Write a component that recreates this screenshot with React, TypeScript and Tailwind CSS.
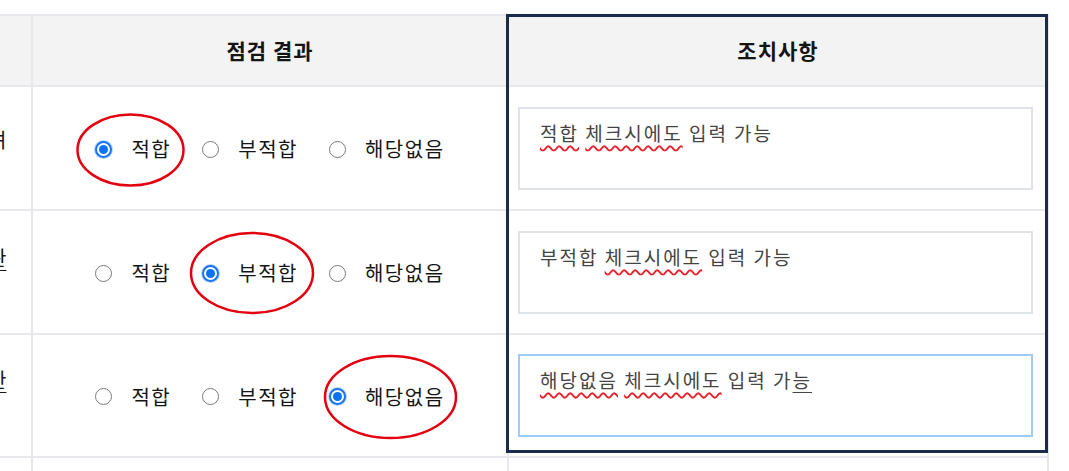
import React from 'react'

const font = { fontFamily: '"Noto Sans CJK KR", "Noto Sans", sans-serif' }

type Choice = '적합' | '부적합' | '해당없음'

function Wavy({ children }: { children: React.ReactNode }) {
    return (
        <span className="underline decoration-wavy decoration-[#e8212b] decoration-[1.5px] underline-offset-[4px]">
            {children}
        </span>
    )
}

const rows: { lead: string; leadTop: string; leadUnderline: boolean; checked: Choice; note: React.ReactNode; focused: boolean }[] = [
    {
        lead: '려',
        leadTop: 'mt-[43px]',
        leadUnderline: false,
        checked: '적합',
        focused: false,
        note: (
            <>
                <Wavy>적합</Wavy> <Wavy>체크시에도</Wavy> 입력 가능
            </>
        ),
    },
    {
        lead: '관',
        leadTop: 'mt-[37px]',
        leadUnderline: true,
        checked: '부적합',
        focused: false,
        note: (
            <>
                부적합 <Wavy>체크시에도</Wavy> 입력 가능
            </>
        ),
    },
    {
        lead: '한',
        leadTop: 'mt-[35px]',
        leadUnderline: true,
        checked: '해당없음',
        focused: true,
        note: (
            <>
                <Wavy>해당없음</Wavy> <Wavy>체크시에도</Wavy> 입력 가<span className="underline decoration-1 underline-offset-[4px]">능</span>
            </>
        ),
    },
]

function Radio({ on }: { on: boolean }) {
    if (on) {
        return (
            <span className="flex h-[17px] w-[17px] shrink-0 items-center justify-center rounded-full border-[2px] border-[#1a73f0] bg-white shadow-[0_0_0_1px_#b9d6fb]">
                <span className="h-[9px] w-[9px] rounded-full bg-[#0a72f5]" />
            </span>
        )
    }
    return <span className="h-[17px] w-[17px] shrink-0 rounded-full border-[1.5px] border-[#7a7a7a] bg-white" />
}

export default function App() {
    const choices: Choice[] = ['적합', '부적합', '해당없음']

    return (
        <div className="relative h-[471px] w-[1069px] overflow-hidden bg-white text-[#151515]" style={font}>
            <div className="pt-[14px]">
                <div className="grid w-[1049px] grid-cols-[33px_476px_540px] border-t-2 border-[#e6e8eb]">
                    {/* header */}
                    <div className="h-[71px] border-r-2 border-b-2 border-[#e6e8eb] bg-[#f3f3f3]" />
                    <div className="flex h-[71px] items-center justify-center border-r-2 border-b-2 border-[#e6e8eb] bg-[#f3f3f3] text-[21px] font-bold tracking-[1px]">
                        점검 결과
                    </div>
                    <div className="flex h-[71px] items-center justify-center border-r-2 border-b-2 border-[#e6e8eb] bg-[#f3f3f3] text-[21px] font-bold tracking-[1px]">
                        조치사항
                    </div>

                    {rows.map((row, i) => (
                        <React.Fragment key={i}>
                            <div className={`flex overflow-hidden border-r-2 border-b-2 border-[#e6e8eb] ${i === 2 ? 'h-[123px]' : 'h-[124px]'}`}>
                                <span
                                    className={`ml-[-12px] ${row.leadTop} text-[20px] leading-none ${row.leadUnderline ? 'underline decoration-1 underline-offset-[4px]' : ''}`}
                                >
                                    {row.lead}
                                </span>
                            </div>
                            <div className="flex items-center justify-center gap-[31px] border-r-2 border-b-2 border-[#e6e8eb] pt-[2px] text-[20px] tracking-[1.5px]">
                                {choices.map((c) => (
                                    <label key={c} className="flex items-center gap-[19px]">
                                        <Radio on={row.checked === c} />
                                        <span>{c}</span>
                                    </label>
                                ))}
                            </div>
                            <div className="flex items-center border-r-2 border-b-2 border-[#e6e8eb] pl-[9px]">
                                <div
                                    className={`h-[83px] w-[515px] border-2 px-[20px] pt-[10px] text-[19px] leading-[28px] tracking-[2px] text-[#444] ${
                                        row.focused ? 'border-[#9fccfb]' : 'border-[#dfe2e6]'
                                    }`}
                                >
                                    {row.note}
                                </div>
                            </div>
                        </React.Fragment>
                    ))}

                    {/* next row peeking in */}
                    <div className="h-[40px] border-r-2 border-[#e6e8eb]" />
                    <div className="h-[40px] border-r-2 border-[#e6e8eb]" />
                    <div className="h-[40px] border-r-2 border-[#e6e8eb]" />
                </div>
            </div>

            {/* highlight box over the 조치사항 column */}
            <div className="pointer-events-none absolute left-[506px] top-[14px] h-[439px] w-[542px] border-[3px] border-[#1c2b4b]" />

            {/* red annotation ellipses */}
            <svg className="pointer-events-none absolute left-0 top-0" width="1069" height="471">
                <ellipse cx="130.5" cy="150" rx="53" ry="35.5" fill="none" stroke="#e3000f" strokeWidth="2.5" />
                <ellipse cx="252" cy="273" rx="61" ry="40" fill="none" stroke="#e3000f" strokeWidth="2.5" />
                <ellipse cx="390.5" cy="397" rx="65.5" ry="41" fill="none" stroke="#e3000f" strokeWidth="2.5" />
            </svg>
        </div>
    )
}
